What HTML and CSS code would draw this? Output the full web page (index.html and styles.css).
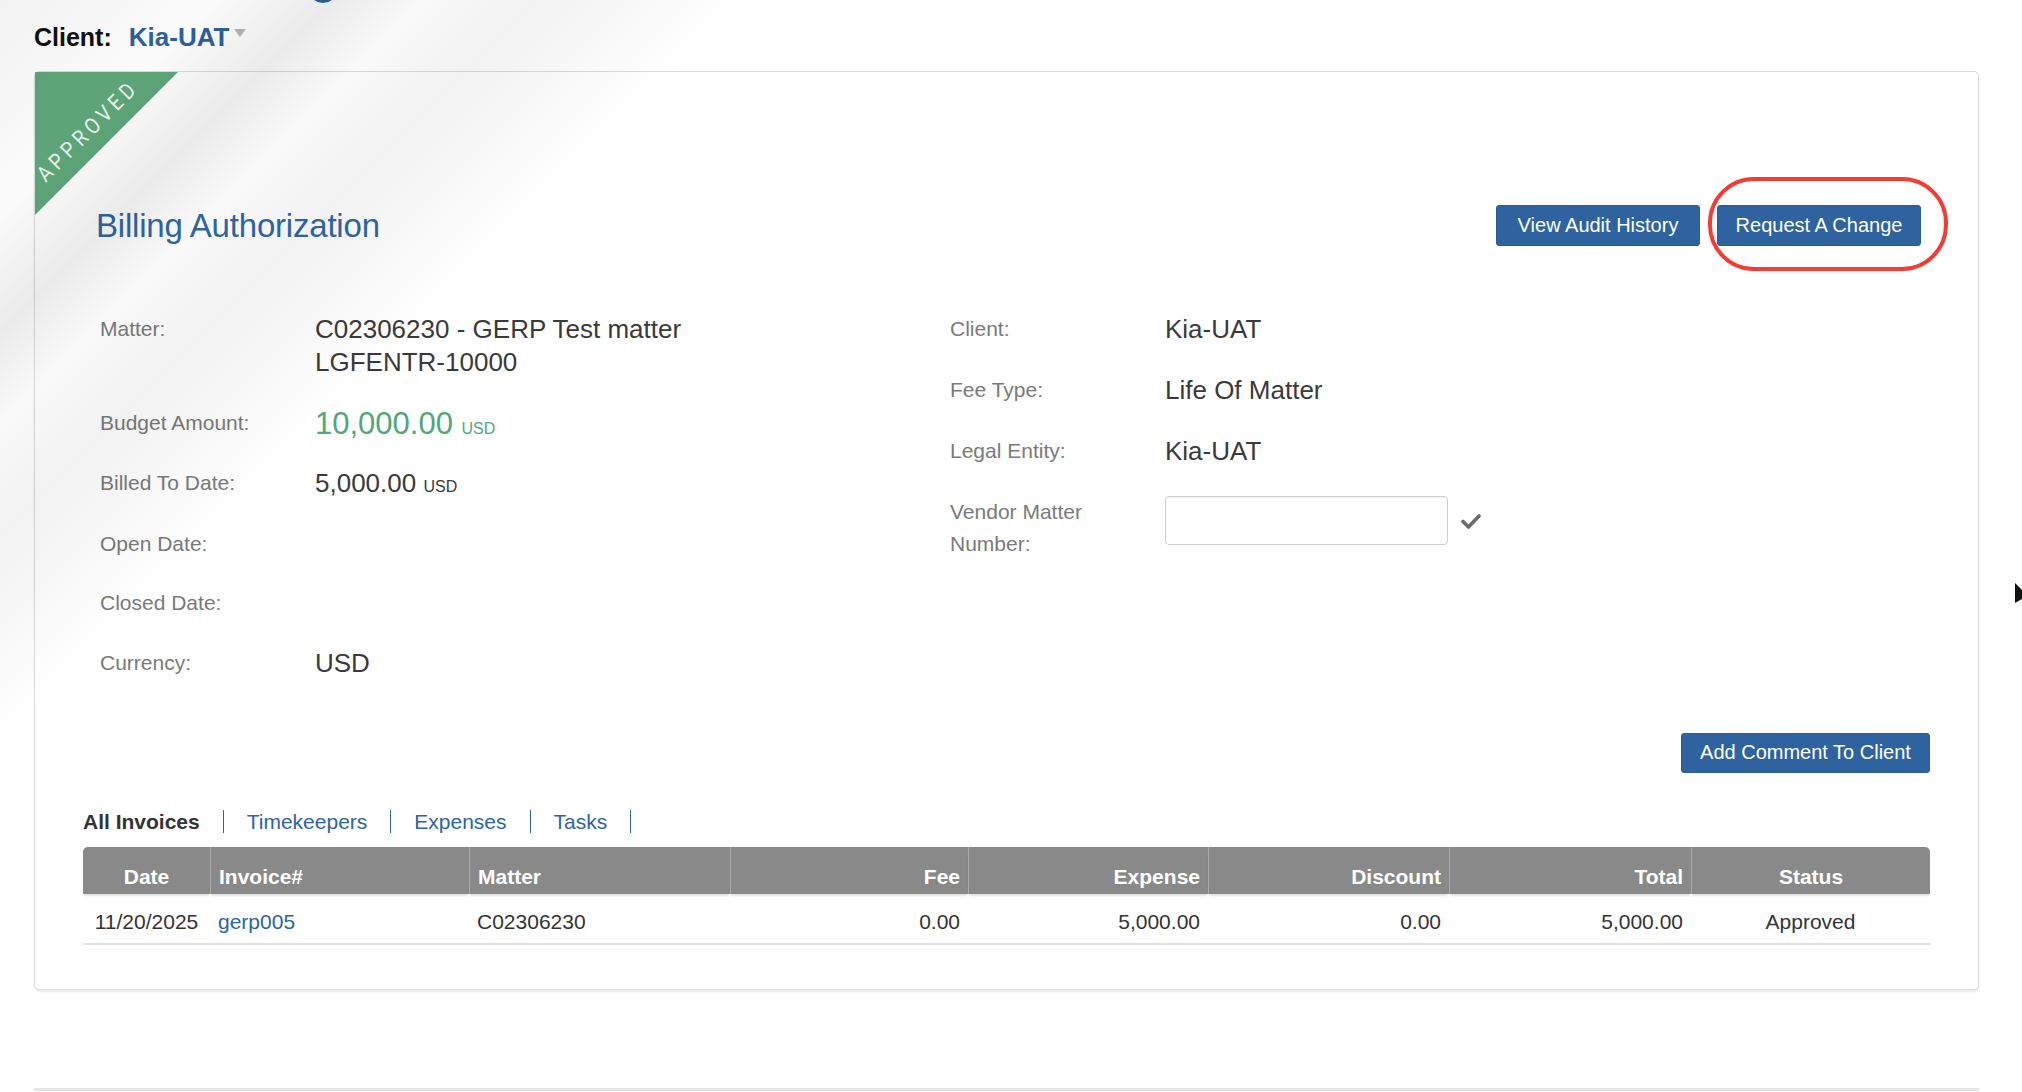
FILE: index.html
```html
<!DOCTYPE html>
<html lang="en">
<head>
  <meta charset="UTF-8">
  <title>Billing Authorization</title>
  <link rel="stylesheet" href="styles.css">
</head>
<body>
  <div class="page">
    <div class="logo-stub"></div>

    <div class="client-bar">
      <span class="client-label">Client:</span>
      <span class="client-name">Kia-UAT</span>
      <span class="caret"></span>
    </div>

    <div class="card">
      <!-- status ribbon -->
      <div class="ribbon"><span>APPROVED</span></div>

      <div class="card-head">
        <h2 class="title">Billing Authorization</h2>
        <div class="actions">
          <button class="btn btn-head">View Audit History</button>
          <span class="marked">
            <button class="btn btn-head">Request A Change</button>
            <span class="annot"></span>
          </span>
        </div>
      </div>

      <!-- Details -->
      <div class="details">
        <div class="col">
          <div class="row">
            <div class="label">Matter:</div>
            <div class="value">C02306230 - GERP Test matter<br>LGFENTR-10000</div>
          </div>
          <div class="row">
            <div class="label">Budget Amount:</div>
            <div class="value amount">10,000.00 <span class="cur">USD</span></div>
          </div>
          <div class="row">
            <div class="label">Billed To Date:</div>
            <div class="value">5,000.00 <span class="cur">USD</span></div>
          </div>
          <div class="row">
            <div class="label">Open Date:</div>
            <div class="value"></div>
          </div>
          <div class="row">
            <div class="label">Closed Date:</div>
            <div class="value"></div>
          </div>
          <div class="row">
            <div class="label">Currency:</div>
            <div class="value">USD</div>
          </div>
        </div>

        <div class="col col-right">
          <div class="row">
            <div class="label">Client:</div>
            <div class="value">Kia-UAT</div>
          </div>
          <div class="row">
            <div class="label">Fee Type:</div>
            <div class="value">Life Of Matter</div>
          </div>
          <div class="row">
            <div class="label">Legal Entity:</div>
            <div class="value">Kia-UAT</div>
          </div>
          <div class="row">
            <div class="label">Vendor Matter Number:</div>
            <div class="value vendor">
              <input type="text" class="vendor-input">
              <svg class="check" width="20" height="16" viewBox="0 0 20 16">
                <path d="M2 8.5 L7.5 14 L18 3" fill="none" stroke="#6b6b6b" stroke-width="3.6" stroke-linecap="round" stroke-linejoin="round"/>
              </svg>
            </div>
          </div>
        </div>
      </div>

      <div class="comment-bar">
        <button class="btn btn-comment">Add Comment To Client</button>
      </div>

      <ul class="tabs">
        <li class="active">All Invoices</li>
        <li>Timekeepers</li>
        <li>Expenses</li>
        <li>Tasks</li>
      </ul>

      <table class="invoices">
        <colgroup>
          <col style="width:127px"><col style="width:259px"><col style="width:261px"><col style="width:238px">
          <col style="width:240px"><col style="width:241px"><col style="width:242px"><col style="width:239px">
        </colgroup>
        <thead>
          <tr>
            <th class="c">Date</th>
            <th>Invoice#</th>
            <th>Matter</th>
            <th class="r">Fee</th>
            <th class="r">Expense</th>
            <th class="r">Discount</th>
            <th class="r">Total</th>
            <th class="c">Status</th>
          </tr>
        </thead>
        <tbody>
          <tr>
            <td class="c">11/20/2025</td>
            <td><a href="#">gerp005</a></td>
            <td>C02306230</td>
            <td class="r">0.00</td>
            <td class="r">5,000.00</td>
            <td class="r">0.00</td>
            <td class="r">5,000.00</td>
            <td class="c">Approved</td>
          </tr>
        </tbody>
      </table>
    </div>

    <div class="footer-line"></div>
  </div>

  <div class="cursor"></div>
</body>
</html>
```

FILE: styles.css
```css
body {
  margin: 0;
  background: #fff;
  font-family: "Liberation Sans", Arial, sans-serif;
  color: #333;
  overflow: hidden;
}

/* glare across the left part of the screen */
body::after {
  content: "";
  position: fixed;
  top: 0;
  left: 0;
  right: 0;
  bottom: 0;
  pointer-events: none;
  background: linear-gradient(135deg,
    rgba(0, 0, 0, 0.05) 0,
    rgba(0, 0, 0, 0.015) 150px,
    rgba(0, 0, 0, 0.08) 235px,
    rgba(0, 0, 0, 0.025) 300px,
    rgba(0, 0, 0, 0.05) 380px,
    rgba(0, 0, 0, 0) 530px);
}

.page {
  padding: 0 43px 0 34px;
}

.logo-stub {
  width: 30px;
  height: 30px;
  border-radius: 50%;
  background: #2e63a0;
  margin: -27px 0 0 274px;
}

.client-bar {
  display: flex;
  align-items: center;
  height: 30px;
  margin-top: 19px;
  font-size: 25px;
  font-weight: bold;
}

.client-label {
  color: #111;
}

.client-name {
  color: #2d62a0;
  margin-left: 17px;
  font-size: 26px;
}

.caret {
  align-self: flex-start;
  width: 0;
  height: 0;
  margin: 7px 0 0 5px;
  border-left: 6px solid transparent;
  border-right: 6px solid transparent;
  border-top: 8px solid #b8b8b8;
}

.card {
  position: relative;
  margin-top: 19px;
  padding: 0 48px 44px 48px;
  border: 1px solid #dcdcdc;
  border-radius: 5px;
  box-shadow: 0 2px 2px rgba(0, 0, 0, 0.08);
  background: #fff;
}

.ribbon {
  position: absolute;
  top: 0;
  left: 0;
  width: 143px;
  height: 143px;
}

.ribbon::before {
  content: "";
  position: absolute;
  top: 0;
  left: 0;
  right: 0;
  bottom: 0;
  background: #5fa87b;
  clip-path: polygon(0 0, 100% 0, 0 100%);
}

.ribbon span {
  position: absolute;
  left: 53px;
  top: 59px;
  transform: translate(-50%, -50%) rotate(-45deg) scaleX(0.88);
  font-family: Roboto, "Liberation Sans", sans-serif;
  font-size: 22px;
  line-height: 22px;
  letter-spacing: 5px;
  color: #eef7f1;
  white-space: nowrap;
}

.card-head {
  display: flex;
  align-items: center;
  justify-content: space-between;
  height: 41px;
  margin-top: 133px;
}

.title {
  margin: 0 0 0 13px;
  font-size: 33px;
  font-weight: normal;
  color: #3068a6;
  letter-spacing: -0.2px;
}

.actions {
  display: flex;
  gap: 17px;
  margin-right: 9px;
}

.btn {
  height: 41px;
  padding: 0 10px;
  border: 1px solid #2a5b95;
  border-radius: 3px;
  background: #2e63a0;
  color: #fff;
  font-family: "Liberation Sans", Arial, sans-serif;
  font-size: 20px;
  white-space: nowrap;
  cursor: pointer;
}

.btn-head {
  width: 204px;
}

.marked {
  position: relative;
  display: inline-block;
}

.annot {
  position: absolute;
  left: -9px;
  top: -28px;
  width: 232px;
  height: 86px;
  border: 4px solid #f23c36;
  border-radius: 46px;
}

.details {
  display: grid;
  grid-template-columns: 850px 1fr;
  margin-top: 67px;
  padding-left: 17px;
}

.row {
  display: flex;
  line-height: 33px;
  margin-bottom: 27.6px;
}

.col-right .row {
  margin-bottom: 28px;
}

.row:last-child {
  margin-bottom: 0;
}

.label {
  width: 195px;
  flex: none;
  padding-right: 20px;
  font-size: 21px;
  line-height: 32px;
  color: #7a7a7a;
}

.value {
  font-size: 26px;
  line-height: 33px;
  color: #3a3a3a;
}

.amount {
  font-size: 31px;
  color: #52a67b;
}

.cur {
  font-size: 16px;
  line-height: 0;
}

.vendor {
  display: flex;
  align-items: center;
  height: 49px;
}

.vendor-input {
  width: 283px;
  height: 49px;
  box-sizing: border-box;
  border: 1px solid #cfcfcf;
  border-radius: 4px;
  box-shadow: inset 0 1px 2px rgba(0, 0, 0, 0.06);
}

.check {
  margin-left: 13px;
}

.comment-bar {
  display: flex;
  justify-content: flex-end;
  margin-top: 53px;
}

.btn-comment {
  width: 249px;
  height: 40px;
}

.tabs {
  display: flex;
  list-style: none;
  margin: 37px 0 0;
  padding: 0;
  font-size: 21px;
  line-height: 23px;
}

.tabs li {
  padding: 0 23px;
  border-right: 1px solid #2c64a4;
  color: #2c64a4;
}

.tabs li:first-child {
  padding-left: 0;
}

.tabs li.active {
  color: #333;
  font-weight: bold;
}

.invoices {
  width: 100%;
  margin-top: 14px;
  border-collapse: separate;
  border-spacing: 0;
  table-layout: fixed;
  font-size: 21px;
}

.invoices th {
  height: 47px;
  padding: 0 8px 5px;
  box-sizing: border-box;
  vertical-align: bottom;
  text-align: left;
  background: #898989;
  color: #fff;
  font-weight: bold;
  border-left: 1px solid #a9a9a9;
  box-shadow: 0 3px 2px -1px rgba(0, 0, 0, 0.12);
}

.invoices th:first-child {
  border-left: none;
  border-top-left-radius: 5px;
}

.invoices th:last-child {
  border-top-right-radius: 5px;
}

.invoices td {
  height: 51px;
  padding: 8px 8px 0;
  box-sizing: border-box;
  border-bottom: 2px solid #e0e0e0;
  color: #333;
}

.invoices .r {
  text-align: right;
}

.invoices .c {
  text-align: center;
}

.invoices a {
  color: #2c64a4;
  text-decoration: none;
}

.footer-line {
  height: 3px;
  margin-top: 98px;
  background: #e6e6e6;
}

.cursor {
  position: fixed;
  right: 0;
  top: 583px;
  width: 7px;
  height: 20px;
  background: #111;
  clip-path: polygon(0 0, 100% 35%, 100% 80%, 0 100%);
}
```
